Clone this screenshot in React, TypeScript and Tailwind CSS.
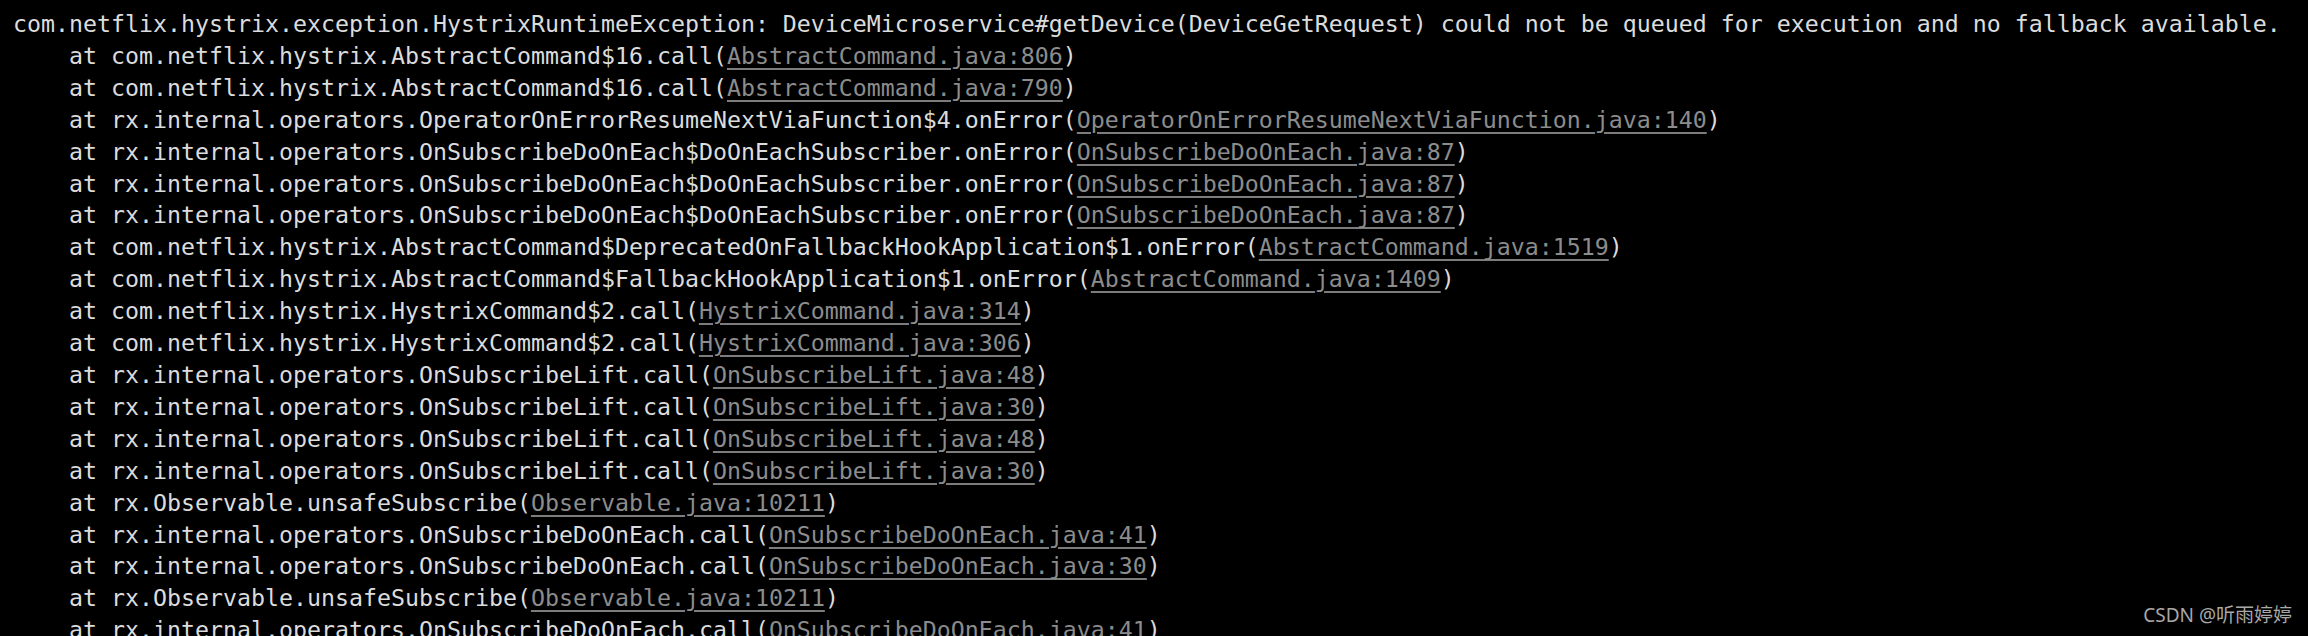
import React from "react";

type Frame = { method: string; file: string };

const header =
  "com.netflix.hystrix.exception.HystrixRuntimeException: DeviceMicroservice#getDevice(DeviceGetRequest) could not be queued for execution and no fallback available.";

const frames: Frame[] = [
  { method: "com.netflix.hystrix.AbstractCommand$16.call", file: "AbstractCommand.java:806" },
  { method: "com.netflix.hystrix.AbstractCommand$16.call", file: "AbstractCommand.java:790" },
  {
    method: "rx.internal.operators.OperatorOnErrorResumeNextViaFunction$4.onError",
    file: "OperatorOnErrorResumeNextViaFunction.java:140",
  },
  { method: "rx.internal.operators.OnSubscribeDoOnEach$DoOnEachSubscriber.onError", file: "OnSubscribeDoOnEach.java:87" },
  { method: "rx.internal.operators.OnSubscribeDoOnEach$DoOnEachSubscriber.onError", file: "OnSubscribeDoOnEach.java:87" },
  { method: "rx.internal.operators.OnSubscribeDoOnEach$DoOnEachSubscriber.onError", file: "OnSubscribeDoOnEach.java:87" },
  {
    method: "com.netflix.hystrix.AbstractCommand$DeprecatedOnFallbackHookApplication$1.onError",
    file: "AbstractCommand.java:1519",
  },
  { method: "com.netflix.hystrix.AbstractCommand$FallbackHookApplication$1.onError", file: "AbstractCommand.java:1409" },
  { method: "com.netflix.hystrix.HystrixCommand$2.call", file: "HystrixCommand.java:314" },
  { method: "com.netflix.hystrix.HystrixCommand$2.call", file: "HystrixCommand.java:306" },
  { method: "rx.internal.operators.OnSubscribeLift.call", file: "OnSubscribeLift.java:48" },
  { method: "rx.internal.operators.OnSubscribeLift.call", file: "OnSubscribeLift.java:30" },
  { method: "rx.internal.operators.OnSubscribeLift.call", file: "OnSubscribeLift.java:48" },
  { method: "rx.internal.operators.OnSubscribeLift.call", file: "OnSubscribeLift.java:30" },
  { method: "rx.Observable.unsafeSubscribe", file: "Observable.java:10211" },
  { method: "rx.internal.operators.OnSubscribeDoOnEach.call", file: "OnSubscribeDoOnEach.java:41" },
  { method: "rx.internal.operators.OnSubscribeDoOnEach.call", file: "OnSubscribeDoOnEach.java:30" },
  { method: "rx.Observable.unsafeSubscribe", file: "Observable.java:10211" },
  { method: "rx.internal.operators.OnSubscribeDoOnEach.call", file: "OnSubscribeDoOnEach.java:41" },
];

export default function App() {
  return (
    <div className="relative h-[636px] w-full overflow-hidden bg-black">
      {/* console output */}
      <div className="pl-[13px] pt-[8px] font-['DejaVu_Sans_Mono',monospace] text-[23.25px] leading-[31.9px] whitespace-pre text-[#dcdcdc]">
        <div>{header}</div>
        {frames.map((f, i) => (
          <div key={i}>
            {"    at " + f.method + "("}
            <span className="text-[#8c8c8c] underline decoration-[#7c7c7c] decoration-[2px] underline-offset-[4px]">
              {f.file}
            </span>
            {")"}
          </div>
        ))}
      </div>

      {/* watermark */}
      <div className="absolute right-[16px] bottom-[8px] font-['Noto_Sans','Noto_Sans_CJK_SC',sans-serif] text-[19px] leading-[26px] text-[#a8a8a8]">
        CSDN @听雨婷婷
      </div>
    </div>
  );
}
